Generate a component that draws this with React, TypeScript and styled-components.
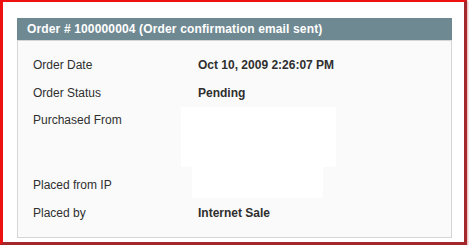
import React from "react";
import styled, { createGlobalStyle } from "styled-components";

const GlobalStyle = createGlobalStyle`
  html, body {
    margin: 0;
    padding: 0;
    background: #ffffff;
  }
  body {
    font-family: "Liberation Sans", Arial, sans-serif;
    font-size: 12px;
    color: #2f2f2f;
  }
`;

const Frame = styled.div`
  box-sizing: border-box;
  width: 467px;
  height: 245px;
  border-style: solid;
  border-width: 2px 3px 3px 3px;
  border-color: #ee1111 #a3282c #a3282c #ee1111;
  box-shadow: 1px 1px 2px rgba(210, 110, 110, 0.6);
  padding: 16px 12px 0 14px;
`;

const Panel = styled.div`
  width: 435px;
`;

const Head = styled.div`
  height: 22px;
  background: #6f8992;
  padding: 0 10px;
  display: flex;
  align-items: center;
`;

const Title = styled.h4`
  margin: 0;
  font-size: 12px;
  font-weight: bold;
  letter-spacing: 0.15px;
  color: #ffffff;
`;

const Body = styled.div`
  border: 1px solid #d6d6d6;
  background: #fafafa;
  padding: 11px 15px 10px;
`;

const Row = styled.div`
  display: grid;
  grid-template-columns: 165px 1fr;
  align-items: start;
  padding: 6px 0;
  line-height: 15.5px;
`;

const Label = styled.div`
  color: #2f2f2f;
`;

const Value = styled.div`
  font-weight: bold;
  color: #2f2f2f;
`;

const Redacted = styled.div<{ $w: number; $h: number; $m: string }>`
  width: ${(p) => p.$w}px;
  height: ${(p) => p.$h}px;
  margin: ${(p) => p.$m};
  background: #ffffff;
`;

export default function App() {
  return (
    <>
      <GlobalStyle />
      <Frame>
        <Panel>
          <Head>
            <Title>Order # 100000004 (Order confirmation email sent)</Title>
          </Head>
          <Body>
            <Row>
              <Label>Order Date</Label>
              <Value>Oct 10, 2009 2:26:07 PM</Value>
            </Row>
            <Row>
              <Label>Order Status</Label>
              <Value>Pending</Value>
            </Row>
            <Row>
              <Label>Purchased From</Label>
              <Value>
                <Redacted $w={155} $h={60} $m="-6px 0 -1px -17px" />
              </Value>
            </Row>
            <Row>
              <Label>Placed from IP</Label>
              <Value>
                <Redacted $w={131} $h={31} $m="-11px 0 -4.5px -6px" />
              </Value>
            </Row>
            <Row>
              <Label>Placed by</Label>
              <Value>Internet Sale</Value>
            </Row>
          </Body>
        </Panel>
      </Frame>
    </>
  );
}
